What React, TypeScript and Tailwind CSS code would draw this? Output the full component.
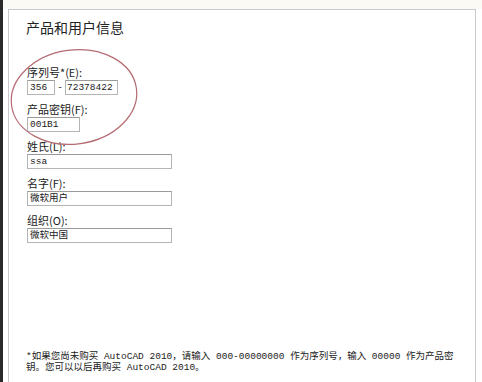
const sans = { fontFamily: '"Noto Sans CJK SC", "Liberation Sans", sans-serif' };
const mono = { fontFamily: '"Liberation Mono", "Noto Sans CJK SC", monospace' };

function Field({ label, value, width }: { label: string; value: string; width: string }) {
  return (
    <div className="flex flex-col">
      <span className="text-[11px] leading-[13px] text-[#222]">{label}</span>
      <div
        className={`mt-[1px] h-[15px] ${width} border border-[#b5b5b5] border-t-[#9a9a9a] bg-white px-[2px] text-[9.5px] leading-[13px] text-[#222]`}
        style={mono}
      >
        {value}
      </div>
    </div>
  );
}

export default function App() {
  return (
    <div className="relative h-[382px] w-[482px] overflow-hidden border-l-[3px] border-[#2a2a2a] bg-white" style={sans}>
      <div className="h-[9px] bg-[#fbfaf4]" />
      <div className="ml-[5px] h-[373px] w-[468px] border-l border-r border-t border-[#c9c9c9] bg-white pl-[17px] pt-[8px]">
        <h1 className="text-[14px] leading-[18px] text-[#222]">产品和用户信息</h1>

        <div className="mt-[30px] flex flex-col gap-[8px] pl-[1px]">
          <div className="flex flex-col">
            <span className="text-[11px] leading-[13px] text-[#222]">序列号*(E):</span>
            <div className="mt-[1px] flex items-center text-[9.5px] leading-[13px] text-[#222]" style={mono}>
              <div className="h-[15px] w-[28px] border border-[#b5b5b5] border-t-[#9a9a9a] px-[2px]">356</div>
              <span className="w-[10px] text-center">-</span>
              <div className="h-[15px] w-[53px] border border-[#b5b5b5] border-t-[#9a9a9a] px-[1px]">72378422</div>
            </div>
          </div>
          <Field label="产品密钥(F):" value="001B1" width="w-[53px]" />
          <Field label="姓氏(L):" value="ssa" width="w-[145px]" />
          <Field label="名字(F):" value="微软用户" width="w-[145px]" />
          <Field label="组织(O):" value="微软中国" width="w-[145px]" />
        </div>

        <div className="mt-[108px] flex flex-col text-[9.5px] leading-[11px] text-[#222]" style={mono}>
          <p className="whitespace-nowrap">*如果您尚未购买 AutoCAD 2010，请输入 000-00000000 作为序列号，输入 00000 作为产品密</p>
          <p className="whitespace-nowrap">钥。您可以以后再购买 AutoCAD 2010。</p>
        </div>
      </div>

      <svg className="pointer-events-none absolute left-0 top-0" width="482" height="382">
        <ellipse cx="71" cy="97" rx="63" ry="47" transform="rotate(-8 71 97)" fill="none" stroke="#b56a72" strokeWidth="1.2" />
      </svg>
    </div>
  );
}
